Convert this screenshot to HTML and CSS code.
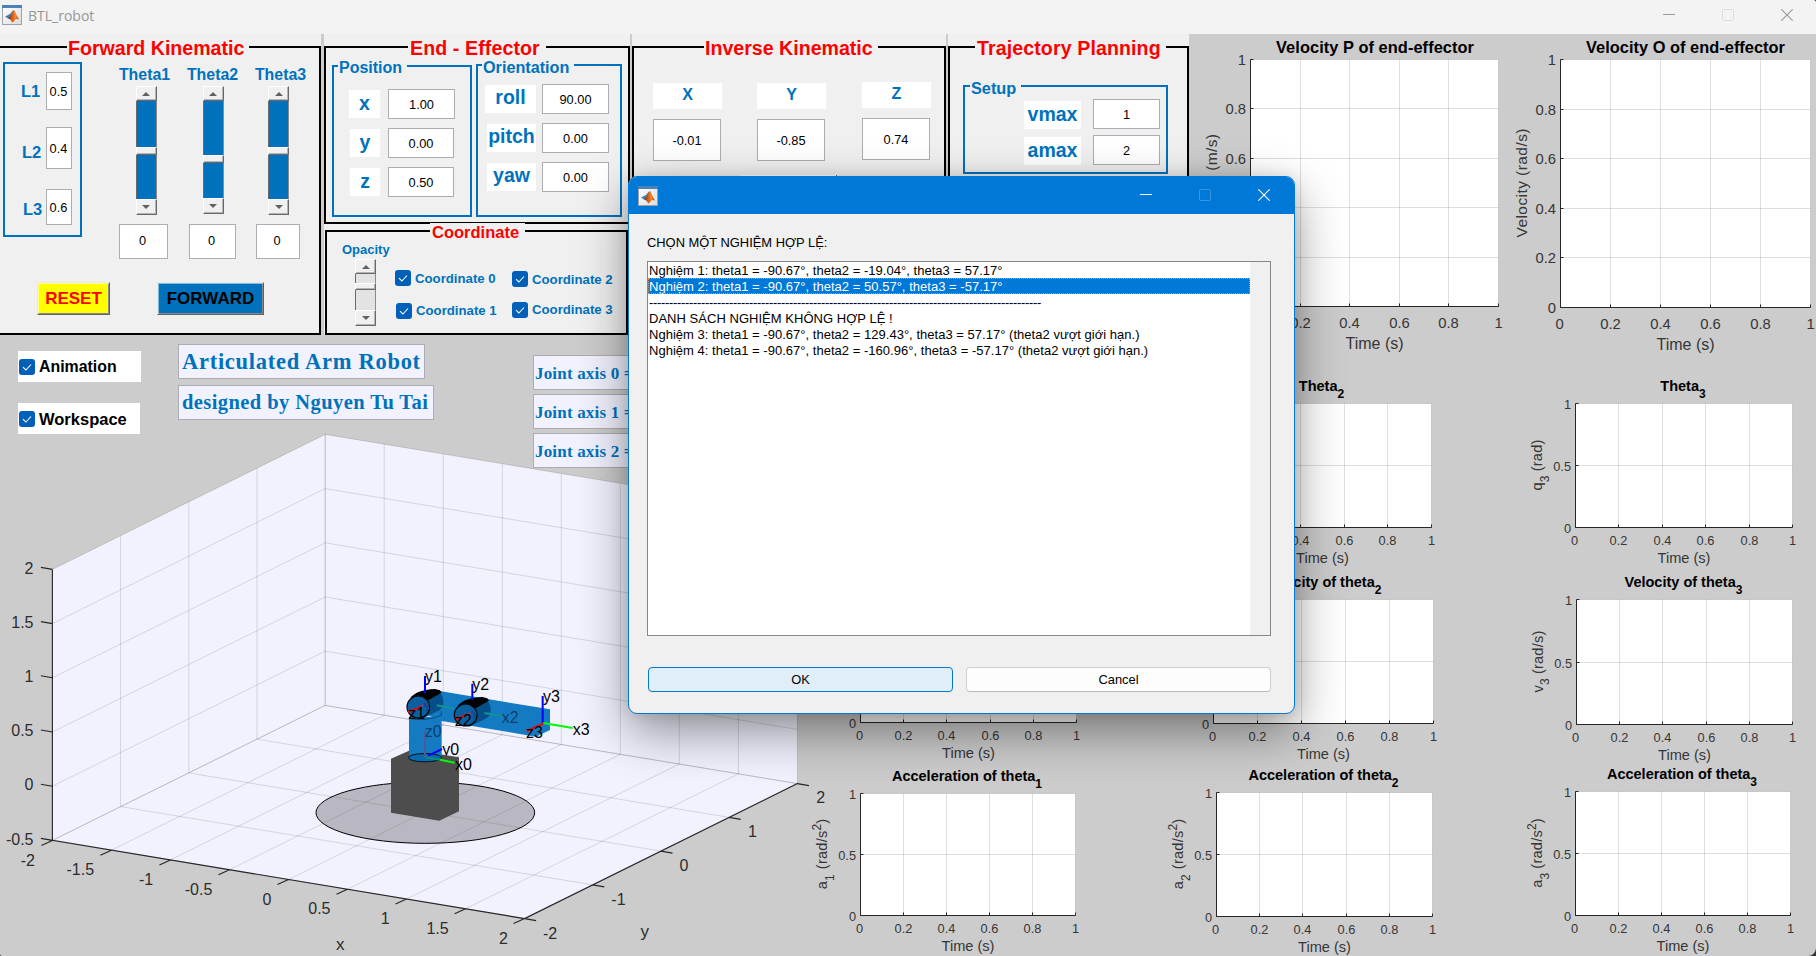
FILE: index.html
```html
<!DOCTYPE html>
<html lang="vi">
<head>
<meta charset="utf-8">
<title>BTL_robot</title>
<link rel="stylesheet" href="styles.css">
</head>
<body>
<svg class="defs" width="0" height="0">
  <defs>
    <linearGradient id="flame" x1="0" x2="1"><stop offset="0" stop-color="#7a2415"/><stop offset=".45" stop-color="#e0641c"/><stop offset=".7" stop-color="#f08a24"/><stop offset="1" stop-color="#a52a14"/></linearGradient>
    <linearGradient id="tile" x1="0" y1="0" x2="1" y2="1"><stop offset="0" stop-color="#fff"/><stop offset="1" stop-color="#dcdcdc"/></linearGradient>
    <symbol id="matlab" viewBox="0 0 20 20">
      <rect x=".5" y=".5" width="19" height="19" fill="url(#tile)" stroke="#9aa3ad"/>
      <rect x="0" y="0" width="20" height="3" fill="#4a83b5"/>
      <path d="M3 11.500 8 9l2.500-3 1-.5-3 8.500-2.500-.5z" fill="#3f7fae"/>
      <path d="M6 13.500c2-1 3.500-5.500 5.500-8.500 1.500 0 3 6 5.500 9.500-2-1-3.500-.5-4.500 1-.6 1-1.500 2-2.500 2-.5-2-1.500-3.500-4-4z" fill="url(#flame)"/>
    </symbol>
    <symbol id="min" viewBox="0 0 12 12"><path d="M0 5.500h12" stroke="currentColor"/></symbol>
    <symbol id="max" viewBox="0 0 12 12"><rect x=".5" y=".5" width="11" height="11" rx="1" fill="none" stroke="currentColor"/></symbol>
    <symbol id="close" viewBox="0 0 12 12"><path d="M.3.3l11.400 11.400M11.700.3.3 11.700" stroke="currentColor" stroke-width="1.100"/></symbol>
    <symbol id="check" viewBox="0 0 16 16"><path d="M4 8.200 6.900 11 12 5.500" fill="none" stroke="#fff" stroke-width="1.100"/></symbol>
  </defs>
</svg>
<div class="window">
  <header class="titlebar">
    <svg class="app-icon"><use href="#matlab"/></svg>
    <span class="app-name">BTL_robot</span>
    <div class="controls">
      <svg><use href="#min"/></svg><svg class="off"><use href="#max"/></svg><svg><use href="#close"/></svg>
    </div>
  </header>

  <div class="top">
    <section class="panel forward">
      <div class="frame">
        <h2 class="legend big">Forward Kinematic</h2>
        <div class="links">
          <div class="link l1"><b>L1</b><span class="edit">0.5</span></div>
          <div class="link l2"><b>L2</b><span class="edit">0.4</span></div>
          <div class="link l3"><b>L3</b><span class="edit">0.6</span></div>
        </div>
        <div class="thetas">
          <div class="theta t1"><b>Theta1</b><div class="slider"><i class="up"></i><i class="track a"></i><i class="thumb"></i><i class="track"></i><i class="down"></i></div><span class="edit">0</span></div>
          <div class="theta t2"><b>Theta2</b><div class="slider"><i class="up"></i><i class="track a"></i><i class="thumb"></i><i class="track"></i><i class="down"></i></div><span class="edit">0</span></div>
          <div class="theta t3"><b>Theta3</b><div class="slider"><i class="up"></i><i class="track a"></i><i class="thumb"></i><i class="track"></i><i class="down"></i></div><span class="edit">0</span></div>
        </div>
        <div class="buttons"><span class="push reset">RESET</span><span class="push go">FORWARD</span></div>
      </div>
    </section>

    <div class="middle">
      <section class="panel effector">
        <div class="frame">
          <h2 class="legend big">End - Effector</h2>
          <div class="box position">
            <h3 class="legend">Position</h3>
            <div class="pair"><b class="tag">x</b><span class="edit">1.00</span></div>
            <div class="pair"><b class="tag">y</b><span class="edit">0.00</span></div>
            <div class="pair"><b class="tag">z</b><span class="edit">0.50</span></div>
          </div>
          <div class="box orientation">
            <h3 class="legend">Orientation</h3>
            <div class="pair"><b class="tag">roll</b><span class="edit">90.00</span></div>
            <div class="pair"><b class="tag">pitch</b><span class="edit">0.00</span></div>
            <div class="pair"><b class="tag">yaw</b><span class="edit">0.00</span></div>
          </div>
        </div>
      </section>
      <section class="panel coordinate">
        <div class="frame">
          <h2 class="legend">Coordinate</h2>
          <div class="opacity"><b>Opacity</b><div class="slider pale"><i class="up"></i><i class="track a"></i><i class="thumb"></i><i class="track"></i><i class="down"></i></div></div>
          <div class="checks">
            <span class="check c0"><svg><use href="#check"/></svg>Coordinate 0</span>
            <span class="check c2"><svg><use href="#check"/></svg>Coordinate 2</span>
            <span class="check c1"><svg><use href="#check"/></svg>Coordinate 1</span>
            <span class="check c3"><svg><use href="#check"/></svg>Coordinate 3</span>
          </div>
        </div>
      </section>
    </div>

    <section class="panel inverse">
      <div class="frame">
        <h2 class="legend big">Inverse Kinematic</h2>
        <div class="axis"><b class="tag">X</b><span class="edit">-0.01</span></div>
        <div class="axis mid"><b class="tag">Y</b><span class="edit">-0.85</span><span class="solve"></span></div>
        <div class="axis last"><b class="tag">Z</b><span class="edit">0.74</span></div>
      </div>
    </section>

    <section class="panel trajectory">
      <div class="frame">
        <h2 class="legend big">Trajectory Planning</h2>
        <div class="box setup">
          <h3 class="legend">Setup</h3>
          <div class="pair"><b class="tag">vmax</b><span class="edit">1</span></div>
          <div class="pair"><b class="tag">amax</b><span class="edit">2</span></div>
        </div>
      </div>
    </section>

    <div class="top-charts">
      <svg class="chart" data-chart="vp" viewBox="1189 34 321 301"></svg>
      <svg class="chart" data-chart="vo" viewBox="1510 34 306 301"></svg>
    </div>
  </div>

  <div class="bottom">
    <div class="scene">
      <svg class="plot3d" viewBox="0 335 806 621">
        <g id="axes3d"></g>
        <g transform="translate(380 650) scale(.33333)" class="robot">
          <ellipse cx="136" cy="488" rx="328" ry="92" fill="rgba(75,72,75,.34)" stroke="#000" stroke-width="3"/>
          <text x="187" y="315">y0</text>
          <path d="M33 326 94 299 237 322V484L178 512 33 488z" fill="#4d4d4d"/>
          <path d="M165 121 510 178V240L468 260 185 213 130 190z" fill="#147bc3"/>
          <path d="M87 200H185V323A49 12 0 0 1 87 323z" fill="#147bc3"/>
          <path d="M87 205Q135 216 184 196L184 184" fill="none" stroke="#064a7a" stroke-width="3"/>
          <ellipse cx="135" cy="323" rx="50" ry="12.500" fill="#0a6ab0" stroke="#011" stroke-width="3"/>
          <g id="joint">
            <path d="M103 142 150 119Q192 120 190 160 188 178 172 184L126 206z" fill="#065089"/>
            <path d="M90 145Q108 120 165 117L180 121 185 128 142 152Q130 136 112 137z" fill="#000"/>
            <ellipse cx="115" cy="171" rx="34" ry="33" fill="#0a5f9f" stroke="#000" stroke-width="3.500"/>
            <path d="M138 160V190Q148 180 148 160z" fill="#065089"/>
          </g>
          <use href="#joint" x="142" y="24"/>
          <g fill="none" stroke-width="6">
            <path d="M135 78V130M277 101V150M488 138V218M145 317 186 297" stroke="#0000f5"/>
            <path d="M84 186 118 173M228 208 260 194M440 243 490 221" stroke="#fa0000"/>
            <path d="M118 170 140 161M260 193 282 185" stroke="#7d405e"/>
            <path d="M135 158V170M277 182V190" stroke="#0a40b8"/>
            <path d="M170 166 222 176M313 189 365 198" stroke="#0c9493"/>
            <path d="M136 322 180 329" stroke="#0a9175"/>
            <path d="M180 329 224 338M490 219 578 234" stroke="#00fa00"/>
            <path d="M135 243V322" stroke="#51589a"/>
          </g>
          <g>
            <text x="135" y="97">y1</text><text x="277" y="121">y2</text><text x="489" y="157">y3</text>
            <text x="578" y="254">x3</text><text x="225" y="359">x0</text>
            <text x="85" y="206">z1</text><text x="224" y="228">z2</text><text x="438" y="265">z3</text>
            <text x="365" y="218" class="dim">x2</text><text x="134" y="262" class="dim">z0</text>
          </g>
        </g>
      </svg>
      <div class="overlay">
        <div class="toggles">
          <span class="toggle"><svg><use href="#check"/></svg>Animation</span>
          <span class="toggle second"><svg><use href="#check"/></svg>Workspace</span>
        </div>
        <div class="credits"><span class="card name">Articulated Arm Robot</span><span class="card author">designed by Nguyen Tu Tai</span></div>
        <div class="joints"><span class="card">Joint axis 0 =</span><span class="card">Joint axis 1 =</span><span class="card">Joint axis 2 =</span></div>
      </div>
    </div>
    <div class="chart-grid">
      <div></div>
      <svg class="chart" data-chart="q2" viewBox="1165 335 345 235"></svg>
      <svg class="chart" data-chart="q3" viewBox="1510 335 306 235"></svg>
      <svg class="chart" data-chart="v1" viewBox="806 570 359 196"></svg>
      <svg class="chart" data-chart="v2" viewBox="1165 570 345 196"></svg>
      <svg class="chart" data-chart="v3" viewBox="1510 570 306 196"></svg>
      <svg class="chart" data-chart="a1" viewBox="806 766 359 190"></svg>
      <svg class="chart" data-chart="a2" viewBox="1165 766 345 190"></svg>
      <svg class="chart" data-chart="a3" viewBox="1510 766 306 190"></svg>
    </div>
  </div>

  <div class="dialog">
    <header class="dialog-bar">
      <svg class="app-icon"><use href="#matlab"/></svg>
      <div class="controls"><svg><use href="#min"/></svg><svg class="off"><use href="#max"/></svg><svg><use href="#close"/></svg></div>
    </header>
    <div class="dialog-body">
      <p class="prompt">CHỌN MỘT NGHIỆM HỢP LỆ:</p>
      <ul class="list">
        <li>Nghiệm 1: theta1 = -90.67°, theta2 = -19.04°, theta3 = 57.17°</li>
        <li class="selected">Nghiệm 2: theta1 = -90.67°, theta2 = 50.57°, theta3 = -57.17°</li>
        <li class="rule">--------------------------------------------------------------------------------------------------</li>
        <li class="caps">DANH SÁCH NGHIỆM KHÔNG HỢP LỆ !</li>
        <li>Nghiệm 3: theta1 = -90.67°, theta2 = 129.43°, theta3 = 57.17° (theta2 vượt giới hạn.)</li>
        <li>Nghiệm 4: theta1 = -90.67°, theta2 = -160.96°, theta3 = -57.17° (theta2 vượt giới hạn.)</li>
      </ul>
      <div class="actions"><span class="btn ok">OK</span><span class="btn">Cancel</span></div>
    </div>
  </div>
</div>
<script src="script.js"></script>
</body>
</html>
```
FILE: styles.css
```css
* { box-sizing: border-box; }
body { margin: 0; background: #333; font-family: "Liberation Sans", Arial, sans-serif; font-size: 13px; color: #000; }
.defs { position: absolute; }
h2, h3, p, ul { margin: 0; padding: 0; }
i { display: block; }
.window { position: relative; width: 1816px; height: 956px; overflow: hidden; background: #ccc; border-radius: 0 3px 8px 2px; display: flex; flex-direction: column; }

/* title bars */
.titlebar { height: 34px; flex: none; background: #f3f3f3; display: flex; align-items: flex-start; padding: 5px 23px 0 2px; color: #999; }
.app-icon { width: 20px; height: 20px; flex: none; }
.app-name { font: 14px/20px "Open Sans", sans-serif; margin: 1px 0 0 6px; color: #969696; }
.controls { margin-left: auto; display: flex; gap: 47px; padding-top: 4px; }
.controls svg { width: 12px; height: 12px; display: block; }
.titlebar .off { color: #dcdcdc; }

/* control panels */
.top { display: flex; height: 301px; flex: none; }
.panel { background: #f0f0f0; padding-top: 12px; flex: none; }
.frame { position: relative; border: 2px solid #000; height: 100%; display: flex; }
.legend { position: absolute; background: #f0f0f0; font-size: 16px; line-height: 20px; font-weight: bold; color: #0072bd; white-space: nowrap; height: 20px; }
.legend.big { font-size: 19.6px; line-height: 24px; height: 24px; top: -12px; color: #f00; }
.edit { background: #fff; border: 1px solid #abadb3; display: flex; align-items: center; justify-content: center; font-size: 12.800px; }
.tag { background: #fff; color: #0072bd; font-size: 19.5px; line-height: 26px; text-align: center; }
.box { position: relative; border: 2px solid #0072bd; flex: none; }
.pair { display: flex; }

.forward { width: 321px; margin-right: 3px; }
.forward .frame { border-left: 0; flex-wrap: wrap; align-content: flex-start; }
.forward .legend { left: 67px; padding: 0 5px 0 1px; }
.links { width: 79px; height: 175px; margin: 14px 0 0 3px; border: 2px solid #0072bd; padding: 8px 8px 0 16px; }
.link { display: flex; justify-content: space-between; color: #0072bd; font-size: 16.500px; }
.link .edit { width: 26px; color: #000; padding-right: 1px; }
.link b { line-height: 18px; }
.l1 .edit { height: 38px; } .l1 b { margin-top: 10px; }
.l2 { margin-top: 17px; } .l2 .edit { height: 42px; } .l2 b { margin: 16px 0 0 1px; }
.l3 { margin-top: 20px; } .l3 .edit { height: 36px; } .l3 b { margin: 11px 0 0 2px; }
.thetas { display: flex; margin: 17px 0 0 37px; }
.theta { display: flex; flex-direction: column; align-items: center; height: 194px; }
.theta b { color: #0072bd; font-size: 15.900px; line-height: 20px; height: 18px; width: 54px; text-align: center; margin-bottom: 3px; }
.theta .edit { height: 35px; margin-top: auto; padding: 0 2px 2px 0; }
.t1 { width: 49px; } .t2 { width: 47px; margin-left: 21px; } .t3 { width: 44px; margin-left: 20px; }
.t1 b { margin-left: 2px; } .t3 b { margin-left: 5px; }
.t1 .slider { margin-left: 5px; } .t2 .slider { margin-left: 1px; height: 128px; } .t3 .slider { margin-left: 1px; }
.t1 .edit { width: 49px; } .t2 .edit { width: 47px; } .t3 .edit { width: 44px; }
.slider { width: 21px; height: 129px; display: flex; flex-direction: column; flex: none; }
.slider .track { background: #0072bd; border-left: 1px solid #696969; border-right: 1px solid #8a8a8a; flex: 1; }
.slider .a { flex: none; height: 46px; }
.t2 .slider .a { height: 54px; }
.slider .thumb, .up, .down { background: #f0f0f0; border: 1px solid; border-color: #fff #696969 #696969 #fff; box-shadow: inset -1px -1px #b4b4b4; flex: none; }
.slider .thumb { height: 8px; }
.up, .down { height: 15px; display: flex; align-items: center; justify-content: center; }
.up::before, .down::before { content: ""; border: 4px solid transparent; border-top: 0; border-bottom: 4px solid #606060; }
.down::before { transform: rotate(180deg); }
.slider .down { height: 16px; }
.pale { height: 67px; }
.pale .track { background: #e3e3e3; }
.pale .a { height: 9px; }
.pale .thumb { height: 7px; }
.buttons { width: 100%; display: flex; gap: 47px; padding: 23px 0 0 37px; }
.push { height: 33px; width: 73px; font-weight: bold; font-size: 17px; text-align: center; line-height: 31px; border: 1px solid; border-color: #e8e8e8 #606060 #606060 #e8e8e8; box-shadow: inset 1px 1px #fff8, inset -1px -1px #8a8a8a; }
.reset { background: #ff0; color: #f00; }
.go { background: #0072bd; width: 107px; }

.middle { width: 306px; margin-right: 2px; display: flex; flex-direction: column; }
.effector { height: 190px; }
.effector .frame { padding-left: 6px; gap: 4px; }
.effector .legend.big { left: 82px; padding: 0 6px 0 2px; letter-spacing: .1px; }
.box .legend { top: -10px; left: 4px; padding: 0 5px 0 1px; }
.position { width: 140px; height: 152px; margin-top: 17px; padding: 22px 0 0 15px; }
.orientation { width: 146px; height: 153px; margin-top: 16px; padding: 18px 0 0 7px; }
.position .legend { top: -9px; }
.orientation .legend { top: -9px; font-size: 16.200px; }
.box .edit { width: 67px; height: 30px; }
.box .tag { height: 28px; }
.position .tag { width: 31px; margin: 1px 8px 0 0; }
.orientation .tag { width: 51px; margin: 1px 6px 0 0; line-height: 25px; }
.position .pair + .pair, .orientation .pair + .pair { margin-top: 9px; }
.position .pair + .pair .tag { width: 30px; margin-left: 1px; }
.position .pair + .pair .edit { width: 66px; }
.orientation .pair + .pair .tag { width: 49px; margin-left: 2px; }
.coordinate { height: 111px; padding-top: 6px; margin-right: 2px; padding-left: 1px; }
.coordinate .frame { padding: 9px 0 0 13px; }
.coordinate .legend { left: 103px; top: -9px; color: #f00; font-size: 16.500px; padding: 0 6px 0 2px; line-height: 18px; height: 17px; }
.opacity { width: 55px; color: #0072bd; display: flex; flex-direction: column; padding-left: 2px; }
.opacity b { line-height: 18px; height: 16px; margin-bottom: 2px; }
.opacity .slider { margin-left: 13px; }
.checks { display: grid; grid-template-columns: 117px 110px; grid-template-rows: 31.500px 20px; margin-top: 29px; }
.check { display: flex; align-items: center; color: #0072bd; font-weight: bold; font-size: 13.200px; gap: 4px; height: 16px; white-space: nowrap; }
.check svg, .toggle svg { width: 16px; height: 16px; background: #005fb8; border-radius: 3px; flex: none; }
.c2 { margin-top: 1px; } .c1 { margin: 1px 0 0 1px; } .c3 { margin-top: 0; }

.inverse { width: 314px; margin-right: 2px; }
.inverse .legend { left: 70px; padding: 0 5px 0 1px; }
.inverse .frame { padding: 35px 0 0 19px; gap: 35px; }
.axis { display: flex; flex-direction: column; width: 69px; }
.axis .tag { height: 26px; font-size: 16px; line-height: 23px; margin-bottom: 10px; }
.axis .edit { width: 68px; height: 42px; }
.axis.last { margin: -1px 0 0 1px; }
.solve { width: 97px; height: 30px; margin: 14px 0 0 -17px; background: #fff; border-right: 1px solid #696969; }

.trajectory { width: 241px; }
.trajectory .legend.big { left: 25px; padding: 0 5px 0 2px; letter-spacing: .1px; }
.setup { width: 205px; height: 89px; margin: 37px 0 0 13px; padding: 12px 0 0 59px; }
.setup .legend { top: -9px; left: 5px; font-size: 16.300px; }
.setup .tag { width: 57px; margin: 2px 12px 0 0; }
.setup .pair + .pair { margin-top: 6px; }

/* charts */
.top-charts { display: flex; }
.chart { display: block; overflow: visible; }
.top-charts .chart { width: 306px; height: 301px; }
.top-charts .chart:first-child { width: 321px; }
.chart .face { fill: #fff; }
.chart .grid { stroke: #262626; stroke-opacity: .15; fill: none; }
.chart .rule { stroke: #262626; fill: none; }
.chart text { fill: #363636; }
.chart .title { fill: #000; font-weight: bold; }
.bottom { display: flex; flex: 1; }
.chart-grid { display: grid; grid-template-columns: 359px 345px 306px; grid-template-rows: 235px 196px 190px; }
.chart-grid .chart { width: 100%; height: 100%; }

/* robot scene */
.scene { width: 806px; display: grid; flex: none; }
.plot3d { grid-area: 1 / 1; width: 806px; height: 621px; overflow: visible; }
.plot3d .wall { fill: #f2f2ff; }
.plot3d .mesh { stroke: #262626; stroke-opacity: .15; fill: none; }
.plot3d .edge { stroke: #262626; fill: none; stroke-width: 1.100; }
.plot3d text { fill: #2c2c2c; font-size: 16px; }
.plot3d .robot text { font-size: 48px; fill: #000; }
.plot3d .robot .dim { fill: #0a3f69; }
.overlay { grid-area: 1 / 1; position: relative; display: flex; align-items: flex-start; padding: 9px 0 0 18px; }
.toggles { width: 160px; padding-top: 7px; display: flex; flex-direction: column; gap: 21px; }
.toggle { display: flex; align-items: center; width: 123px; height: 31px; background: #fff; padding: 1px 0 0 1px; font-weight: bold; font-size: 15.900px; gap: 4px; }
.toggle svg { margin-top: -1px; }
.toggle.second { font-size: 16.500px; width: 122px; }
.credits, .joints { display: flex; flex-direction: column; gap: 6px; width: 256px; align-items: flex-start; }
.card { height: 35px; background: #f2f2ff; border: 1px solid #abadb3; color: #0072bd; font: bold 20px/33px "Liberation Serif", serif; padding-left: 3px; white-space: nowrap; }
.name { width: 247px; font-size: 22.500px; letter-spacing: .72px; }
.author { width: 256px; font-size: 20.500px; letter-spacing: .42px; }
.joints { margin: 11px 0 0 99px; gap: 4px; width: 170px; }
.joints .card { width: 170px; font-size: 17px; line-height: 35px; padding-left: 1px; letter-spacing: .18px; }

/* solution picker */
.dialog { position: absolute; left: 628px; top: 176px; width: 667px; height: 538px; border: 1px solid #0078d7; border-radius: 9px; background: #f0f0f0; overflow: hidden; display: flex; flex-direction: column; }
.dialog { box-shadow: 0 18px 50px rgba(0, 0, 0, .42), 0 0 16px rgba(0, 0, 0, .1); }
.dialog-bar { height: 37px; background: #0078d7; color: #fff; display: flex; padding: 9px 24px 0 9px; }
.dialog-bar .controls { padding-top: 3px; }
.dialog-bar .off { color: #3a96e0; }
.dialog-body { padding: 20px 23px 0 18px; }
.prompt { line-height: 18px; height: 16px; font-size: 12.900px; }
.list { list-style: none; margin-top: 11px; height: 375px; border: 1px solid #828790; background: linear-gradient(to right, #fff calc(100% - 20px), #f0f0f0 0); }
.list li { height: 16px; line-height: 17px; font-size: 13px; letter-spacing: .025px; width: 602px; padding-left: 1px; white-space: nowrap; }
.list .selected { background: #0078d7; color: #fff; outline: 1px dotted #ff8728; outline-offset: -1px; }
.list .rule { letter-spacing: -.330px; }
.list .caps { letter-spacing: .03px; }
.actions { display: flex; gap: 13px; margin: 31px 0 0 1px; }
.btn { flex: 1; height: 25px; border: 1px solid #d0d0d0; border-bottom-color: #bbb; border-radius: 4px; background: #fdfdfd; text-align: center; line-height: 24px; font-size: 12.900px; }
.btn.ok { background: #e0eef9; border-color: #0078d4; }
```
FILE: script.js
```js
// 2D chart axes: left/right/top/bottom edges, title, subscript, y label parts and text anchors.
const charts = {
  vp: { l: 1250.5, r: 1498.5, t: 59.5, b: 306.5, big: true, title: "Velocity P of end-effector", tl: 198, tx: 1375, y: "Velocity (m/s)", yx: 1217, yy: 183, yl: 98 },
  vo: { l: 1560.5, r: 1810.5, t: 59.5, b: 307.5, big: true, title: "Velocity O of end-effector", tl: 199, tx: 1685.5, y: "Velocity (rad/s)", yx: 1527, yy: 183, yl: 109 },
  q2: { l: 1213.5, r: 1431.5, t: 403.5, b: 527.5, title: "Theta", sub: "2" },
  q3: { l: 1575.5, r: 1792.5, t: 403.5, b: 527.5, title: "Theta", sub: "3", v: "q", unit: "(rad)", yx: 1542 },
  v1: { l: 860.5, r: 1076.5, t: 599.5, b: 722.5 },
  v2: { l: 1213.5, r: 1433.5, t: 599.5, b: 723.5, title: "Velocity of theta", sub: "2" },
  v3: { l: 1576.5, r: 1792.5, t: 599.5, b: 724.5, title: "Velocity of theta", sub: "3", v: "v", unit: "(rad/s)", yx: 1542.5 },
  a1: { l: 860.5, r: 1075.5, t: 793.5, b: 915.5, title: "Acceleration of theta", sub: "1", v: "a", gap: true, unit: "(rad/s", sup: "2", yx: 827 },
  a2: { l: 1216.5, r: 1432.5, t: 792.5, b: 916.5, title: "Acceleration of theta", sub: "2", v: "a", gap: true, unit: "(rad/s", sup: "2", yx: 1183 },
  a3: { l: 1575.5, r: 1790.5, t: 791.5, b: 915.5, title: "Acceleration of theta", sub: "3", v: "a", unit: "(rad/s", sup: "2", yx: 1542 }
};

function drawChart(c) {
  const w = c.r - c.l, h = c.b - c.t, mid = (c.l + c.r) / 2;
  const xs = [0, 0.2, 0.4, 0.6, 0.8, 1];
  const ys = c.big ? xs : [0, 0.5, 1];
  const tick = c.big ? 14.8 : 12.8, label = c.big ? 16 : 14.6;
  const px = v => Math.floor(c.l + v * w) + 0.5;
  const py = v => Math.floor(c.b - v * h) + 0.5;
  let out = `<rect class="face" x="${c.l}" y="${c.t}" width="${w}" height="${h}"/>`;
  let grid = "", marks = `M${c.l} ${c.t}V${c.b}H${c.r}`;
  for (const v of xs) {
    if (v) grid += `M${px(v)} ${c.t}V${c.b}`;
    marks += `M${px(v)} ${c.b}v-3`;
    out += `<text x="${px(v) - (v ? 0 : 1)}" y="${c.b + (c.big ? 21.5 : 17.5)}" font-size="${tick}" text-anchor="middle">${v}</text>`;
  }
  for (const v of ys) {
    if (v) grid += `M${c.l} ${py(v)}H${c.r}`;
    marks += `M${c.l} ${py(v)}h3`;
    out += `<text x="${c.l - 4.5}" y="${py(v) + 5.5}" font-size="${tick}" text-anchor="end">${v}</text>`;
  }
  out += `<path class="grid" d="${grid}"/><path class="rule" d="${marks}"/>`;
  out += `<text x="${mid}" y="${c.b + (c.big ? 42.5 : 35.3)}" font-size="${label}" text-anchor="middle">Time (s)</text>`;
  if (c.big) {
    out += `<text class="title" x="${c.tx}" y="53" font-size="16.400" text-anchor="middle" textLength="${c.tl}">${c.title}</text>`;
    out += `<text transform="translate(${c.yx} ${c.yy}) rotate(-90)" font-size="15.500" text-anchor="middle" textLength="${c.yl}">${c.y}</text>`;
  } else if (c.title) {
    out += `<text class="title" x="${mid - 1}" y="${c.t - 12.3}" font-size="14.500" text-anchor="middle">${c.title}<tspan dy="6.500" font-size="12">${c.sub}</tspan></text>`;
  }
  if (c.v) {
    const sup = c.sup ? `<tspan dy="-6" font-size="12">${c.sup}</tspan><tspan dy="6">)</tspan>` : "";
    out += `<text transform="translate(${c.yx} ${(c.t + c.b) / 2 - 0.5}) rotate(-90)" font-size="14.600" letter-spacing=".2" text-anchor="middle">${c.v}<tspan dy="6.500" font-size="12">${c.sub}</tspan><tspan dy="-6.500" dx="${c.gap ? 5 : 4}">${c.unit}</tspan>${sup}</text>`;
  }
  return out;
}

document.querySelectorAll("[data-chart]").forEach(svg => {
  svg.innerHTML = drawChart(charts[svg.dataset.chart]);
});

// 3D axes: orthographic projection of x, y in [-2, 2] and z in [-0.5, 2].
const project = (x, y, z) => [52.4 + (x + 2) * 118.05 + (y + 2) * 68.2, 840.4 + (x + 2) * 19.55 - (y + 2) * 33.75 - (z + 0.5) * 108.4];
const at = (x, y, z) => project(x, y, z).map(n => n.toFixed(1)).join(" ");
const line = (a, b) => `M${at(...a)}L${at(...b)}`;

function drawAxes() {
  let mesh = "", edge = "", text = "";
  for (let x = -2; x <= 2; x += 0.5) {
    mesh += line([x, -2, -0.5], [x, 2, -0.5]) + line([x, 2, -0.5], [x, 2, 2]);
    edge += `M${at(x, -2, -0.5)}l-11 5`;
    const k = (x + 2) * 2;
    text += `<text x="${35 + k * 59.1}" y="${865.5 + k * 9.75}" text-anchor="end">${x}</text>`;
  }
  for (let y = -2; y <= 2; y++) {
    mesh += line([-2, y, -0.5], [2, y, -0.5]) + line([-2, y, -0.5], [-2, y, 2]);
    edge += `M${at(2, y, -0.5)}l11.500 2`;
    text += `<text x="${543 + (y + 2) * 68.3}" y="${938.7 - (y + 2) * 34}">${y}</text>`;
  }
  for (let z = -0.5; z <= 2; z += 0.5) {
    mesh += line([-2, -2, z], [-2, 2, z]) + line([-2, 2, z], [2, 2, z]);
    edge += `M${at(-2, -2, z)}l-11.500 -2`;
    text += `<text x="33.500" y="${844.5 - (z + 0.5) * 108.4}" text-anchor="end">${z}</text>`;
  }
  edge += `M${at(-2, -2, 2)}L${at(-2, -2, -0.5)}L${at(2, -2, -0.5)}L${at(2, 2, -0.5)}`;
  const wall = [[-2, -2, 2], [-2, 2, 2], [2, 2, 2], [2, 2, -0.5], [2, -2, -0.5], [-2, -2, -0.5]].map(p => at(...p)).join("L");
  return `<path class="wall" d="M${wall}z"/><path class="mesh" d="${mesh}"/><path class="edge" d="${edge}"/>${text}` +
    `<text x="336" y="950" style="font-size:17px">x</text><text x="640.500" y="936.500" style="font-size:17px">y</text>`;
}
document.getElementById("axes3d").innerHTML = drawAxes();
```
